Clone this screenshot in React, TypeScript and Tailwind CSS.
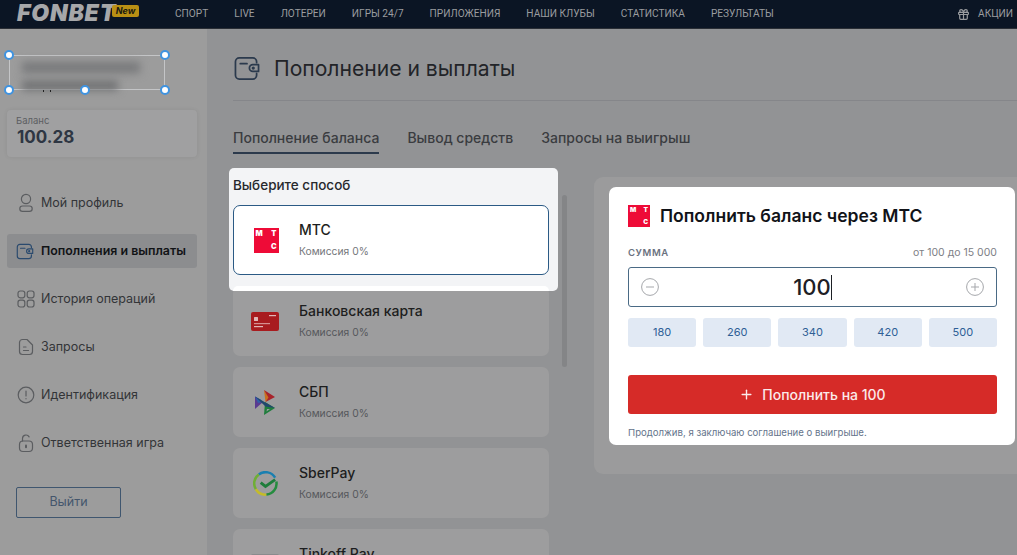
import { Gift, Plus } from "lucide-react";

const nav = ["СПОРТ", "LIVE", "ЛОТЕРЕИ", "ИГРЫ 24/7", "ПРИЛОЖЕНИЯ", "НАШИ КЛУБЫ", "СТАТИСТИКА", "РЕЗУЛЬТАТЫ"];
const presets = [180, 260, 340, 420, 500];

function WalletIcon({ className }: { className?: string }) {
  return (
    <svg viewBox="0 0 28 26" fill="none" stroke="currentColor" strokeWidth="1.8" className={className}>
      <path d="M24 7V6a4 4 0 0 0-4-4H6a4 4 0 0 0-4 4v14a4 4 0 0 0 4 4h14a4 4 0 0 0 4-4v-2" strokeLinecap="round" />
      <path d="M7 8h7" strokeLinecap="round" />
      <path d="M26 9h-6a3.5 3.5 0 0 0 0 7h6z" strokeLinejoin="round" />
      <circle cx="20.5" cy="12.5" r=".8" fill="currentColor" />
    </svg>
  );
}

function ProfileIcon() {
  return (
    <svg viewBox="0 0 20 20" fill="none" stroke="currentColor" strokeWidth="1.2" className="w-[20px] h-[20px]">
      <circle cx="10" cy="6" r="4.6" />
      <rect x="3.8" y="13" width="12.4" height="5.4" rx="2.7" />
    </svg>
  );
}

function GridIcon() {
  return (
    <svg viewBox="0 0 20 20" fill="none" stroke="currentColor" strokeWidth="1.2" className="w-[20px] h-[20px]">
      <rect x="2" y="2" width="6.8" height="6.8" rx="2.2" />
      <rect x="11.2" y="2" width="6.8" height="6.8" rx="2.2" />
      <rect x="2" y="11.2" width="6.8" height="6.8" rx="2.2" />
      <rect x="11.2" y="11.2" width="6.8" height="6.8" rx="2.2" />
    </svg>
  );
}

function DocIcon() {
  return (
    <svg viewBox="0 0 20 20" fill="none" stroke="currentColor" strokeWidth="1.2" strokeLinecap="round" className="w-[20px] h-[20px]">
      <path d="M8 2.5H6.5a3 3 0 0 0-3 3v9a3 3 0 0 0 3 3h7a3 3 0 0 0 3-3V8l-5.5-5.5z" strokeLinejoin="round" />
      <path d="M7.5 10h2.5M7.5 13.5h5" />
    </svg>
  );
}

function AlertIcon() {
  return (
    <svg viewBox="0 0 20 20" fill="none" stroke="currentColor" strokeWidth="1.2" strokeLinecap="round" className="w-[20px] h-[20px]">
      <circle cx="10" cy="10" r="7.8" />
      <path d="M10 6v5M10 13.6v.2" />
    </svg>
  );
}

function LockIcon() {
  return (
    <svg viewBox="0 0 20 20" fill="none" stroke="currentColor" strokeWidth="1.2" strokeLinecap="round" className="w-[20px] h-[20px]">
      <path d="M6.5 8V5.5a3.5 3.5 0 0 1 6.6-1.6" />
      <rect x="3.5" y="8" width="13" height="10.5" rx="3.5" />
      <path d="M10 12.4v1.8" strokeWidth="2" />
    </svg>
  );
}

function MtsLogo({ size }: { size: "lg" | "sm" }) {
  return (
    <div
      className={
        size === "lg"
          ? "w-[25px] h-[25px] bg-[#ee0b37] text-white font-black text-[7.5px] leading-none px-[2px] py-[2px] flex flex-col justify-between shrink-0"
          : "w-[22px] h-[22px] bg-[#ee0b37] text-white font-black text-[6.5px] leading-none px-[2px] py-[2px] flex flex-col justify-between shrink-0"
      }
    >
      <div className="flex justify-between">
        <span>М</span>
        <span>Т</span>
      </div>
      <div className="flex justify-end">
        <span>С</span>
      </div>
    </div>
  );
}

function CardLogo() {
  return (
    <svg viewBox="0 0 28 19" className="w-[28px] h-[19px]">
      <rect width="28" height="19" rx="2" fill="#a81c1f" />
      <rect x="3" y="5" width="4" height="4" rx=".5" fill="#e0b8b8" />
      <rect x="18" y="3" width="7" height="1.2" fill="#e0b8b8" />
      <rect x="3" y="11" width="16" height="1.2" fill="#d68f8f" />
      <rect x="3" y="14" width="9" height="1.2" fill="#e0b8b8" />
    </svg>
  );
}

function SbpLogo() {
  return (
    <svg viewBox="9 5 22 27" className="w-[22px] h-[27px]">
      <path d="M19 6l5.5 7.5-4 4.5z" fill="#c9701e" />
      <path d="M19 6l11 7-9.5 5 3-4.5z" fill="#a8232b" />
      <path d="M10 12.5V25l8-7z" fill="#5a3a90" />
      <path d="M10 12.5l6 3.2 1 2.3-4 1z" fill="#2f5fa8" />
      <path d="M20 18l10 6-11 7z" fill="#1f7d3c" />
      <path d="M10 12.5l20 11.5-9.5-1.5z" fill="#22476e" />
      <path d="M22 25l3 0-3.5 2.5z" fill="#9ea0a0" />
    </svg>
  );
}

function SberLogo() {
  return (
    <svg viewBox="0 0 26 26" fill="none" className="w-[25px] h-[25px]">
      <path d="M23 7A11.5 11.5 0 0 0 6 3.6" stroke="#1a7fb0" strokeWidth="2.6" />
      <path d="M6 3.6A11.5 11.5 0 0 0 3 19" stroke="#6fae35" strokeWidth="2.6" />
      <path d="M3 19a11.5 11.5 0 0 0 11 5.5" stroke="#c4bb2a" strokeWidth="2.6" />
      <path d="M14 24.5A11.5 11.5 0 0 0 24.3 11" stroke="#258c3f" strokeWidth="2.6" />
      <path d="M8 12l5 4 10-7" stroke="#1f7d3c" strokeWidth="3" />
    </svg>
  );
}

function MethodCard({ name, logo }: { name: string; logo: React.ReactNode }) {
  return (
    <div className="h-[70px] shrink-0 rounded-[7px] bg-[#9d9d9e] flex items-center pl-[18px]">
      <div className="w-[28px] flex justify-center shrink-0">{logo}</div>
      <div className="ml-[20px]">
        <div className="text-[14px] leading-[18px] font-medium text-[#1d1e20] -mt-[2px]">{name}</div>
        <div className="text-[10.3px] leading-[14px] text-[#56585c] mt-[5px]">Комиссия 0%</div>
      </div>
    </div>
  );
}

function MenuItem({ icon, label, active }: { icon: React.ReactNode; label: string; active?: boolean }) {
  return (
    <div
      className={
        active
          ? "h-[34px] w-[190px] ml-[7px] rounded-[3px] bg-[#8c8d8f] flex items-center pl-[9px] text-[12.4px] font-semibold text-[#111316]"
          : "h-[34px] w-[190px] ml-[7px] flex items-center pl-[9px] text-[12.5px] text-[#333538]"
      }
    >
      <span className={active ? "text-[#2a4a6e] w-[24px] shrink-0" : "text-[#5b5d60] w-[24px] shrink-0"}>{icon}</span>
      <span className="ml-px">{label}</span>
    </div>
  );
}

export default function App() {
  return (
    <div className="w-[1017px] h-[555px] overflow-hidden flex flex-col bg-[#929395] font-['Inter','Noto_Sans',sans-serif]">
      {/* Top bar */}
      <header className="h-[29px] shrink-0 bg-[#0b1524] flex items-center pl-[17px] pr-[4px] border-b border-[#2a2e35]">
        <div className="text-[23px] leading-none font-black italic tracking-[0.8px] text-[#a6a7a9] w-[91px] -mt-[2px]">FONBET</div>
        <div className="w-[27px] h-[12px] -mt-[7px] ml-[4px] rounded-[2px] bg-[#b98f14] text-[#1c1a10] text-[9px] leading-[12px] font-bold italic text-center">New</div>
        <nav className="flex gap-[26px] ml-[36px] font-['Roboto',sans-serif] text-[10.13px] text-[#9a9c9f]">
          {nav.map((n) => (
            <span key={n}>{n}</span>
          ))}
        </nav>
        <div className="ml-auto flex items-center gap-[8px] font-['Roboto',sans-serif] text-[10.13px] text-[#9a9c9f]">
          <Gift size={13} strokeWidth={2.2} />
          <span>АКЦИИ</span>
        </div>
      </header>

      <div className="flex flex-1 min-h-0">
        {/* Sidebar */}
        <aside className="w-[207px] shrink-0 bg-[#9c9c9c] flex flex-col">
          <div className="relative w-[156px] h-[35px] ml-[9px] mt-[26px] border border-[#c4c5c7]">
            <div className="absolute left-[12px] top-[6px] w-[118px] h-[11px] bg-[#77787a] blur-[4px]" />
            <div className="absolute left-[12px] top-[25px] w-[96px] h-[9px] bg-[#6c6d6f] blur-[4px]" />
            <span className="absolute left-[33px] top-[34px] w-px h-[2px] bg-[#222]" />
            <span className="absolute left-[40px] top-[34px] w-px h-[2px] bg-[#222]" />
            {[
              "left-[-6px] top-[-6px]",
              "left-[150px] top-[-6px]",
              "left-[-6px] top-[29px]",
              "left-[70px] top-[29px]",
              "left-[150px] top-[29px]",
            ].map((p) => (
              <span key={p} className={"absolute w-[10px] h-[10px] rounded-full bg-white border-[2px] border-[#3f93e0] " + p} />
            ))}
          </div>

          <div className="w-[190px] h-[47px] ml-[7px] mt-[20px] rounded-[4px] bg-[#a0a0a1] pl-[9px] pt-[5px] shadow-[0_0_4px_rgba(0,0,0,0.08)]">
            <div className="text-[9.5px] leading-[12px] text-[#5c5e61]">Баланс</div>
            <div className="text-[17px] leading-[20px] font-bold text-[#2e3643] ml-px">100.28</div>
          </div>

          <div className="flex flex-col gap-[14px] mt-[29px]">
            <MenuItem icon={<ProfileIcon />} label="Мой профиль" />
            <MenuItem icon={<WalletIcon className="w-[18px] h-[17px]" />} label="Пополнения и выплаты" active />
            <MenuItem icon={<GridIcon />} label="История операций" />
            <MenuItem icon={<DocIcon />} label="Запросы" />
            <MenuItem icon={<AlertIcon />} label="Идентификация" />
            <MenuItem icon={<LockIcon />} label="Ответственная игра" />
          </div>

          <div className="w-[105px] h-[31px] ml-[16px] mt-[27px] rounded-[2px] border border-[#3f566f] flex items-center justify-center text-[12.5px] text-[#44566c]">
            Выйти
          </div>
        </aside>

        {/* Main */}
        <main className="flex-1 min-w-0 pl-[26px] flex flex-col">
          <div className="h-[72px] shrink-0 border-b border-[#85868a] flex items-center gap-[12px] pt-[8px] text-[#2b3a4d]">
            <WalletIcon className="w-[28px] h-[25px]" />
            <span className="text-[21.1px] text-[#222428] ml-px">Пополнение и выплаты</span>
          </div>

          <div className="flex gap-[28px] mt-[26px] text-[14px] font-medium text-[#3a3c40] shrink-0">
            <span className="h-[27px] border-b-[2px] border-[#2c3a4c]">Пополнение баланса</span>
            <span>Вывод средств</span>
            <span>Запросы на выигрыш</span>
          </div>

          <div className="flex flex-1 min-h-0 mt-[14px]">
            <div className="relative w-[316px] shrink-0 flex flex-col gap-[11px]">
              {/* Highlighted step */}
              <div className="bg-[#f3f4f6] rounded-[5px] -mx-[4px] mr-[-9px] px-[4px] pr-[9px] h-[123px] -mb-[16px] relative shrink-0">
                <div className="text-[13.5px] leading-[18px] font-medium text-[#27292d] pt-[8px] h-[37px]">Выберите способ</div>
                <div className="h-[70px] rounded-[7px] bg-white border-[1.5px] border-[#2b5a85] flex items-center pl-[18px]">
                  <div className="w-[28px] flex justify-center shrink-0">
                    <MtsLogo size="lg" />
                  </div>
                  <div className="ml-[19px]">
                    <div className="text-[14px] leading-[18px] font-medium text-[#1d1e20] -mt-[2px]">МТС</div>
                    <div className="text-[10.3px] leading-[14px] text-[#75777b] mt-[5px]">Комиссия 0%</div>
                  </div>
                </div>
                <div className="absolute left-[4px] right-[9px] bottom-0 h-[5px] bg-white rounded-t-[6px]" />
              </div>
              <MethodCard name="Банковская карта" logo={<CardLogo />} />
              <MethodCard name="СБП" logo={<SbpLogo />} />
              <MethodCard name="SberPay" logo={<SberLogo />} />
              <MethodCard name="Tinkoff Pay" logo={<div className="w-[28px] h-[20px] rounded-[2px] bg-[#8a8b8d]" />} />
            </div>

            {/* Scrollbar */}
            <div className="w-[5px] h-[172px] ml-[13px] mt-[27px] rounded-full bg-[#848587] shrink-0" />

            {/* Amount panel */}
            <div className="w-[423px] h-[297px] ml-[27px] mt-[9px] rounded-l-[9px] bg-[#9b9b9c] pl-[15px] pt-[10px] shrink-0">
              <div className="w-[406px] h-[258px] rounded-[7px] bg-white pl-[19px] pr-[18px] pt-[18px]">
                <div className="flex items-center gap-[10px]">
                  <MtsLogo size="sm" />
                  <span className="text-[17.55px] leading-[22px] font-semibold text-[#111318]">Пополнить баланс через МТС</span>
                </div>
                <div className="flex justify-between items-center mt-[19px] h-[14px]">
                  <span className="text-[9.5px] font-semibold tracking-[0.6px] text-[#6b7280]">СУММА</span>
                  <span className="text-[10.5px] text-[#7d8086]">от 100 до 15 000</span>
                </div>
                <div className="h-[40px] mt-[7px] rounded-[3px] border border-[#4a6a85] flex items-center justify-between px-[12px]">
                  <svg viewBox="0 0 18 18" fill="none" stroke="#a5a7ab" strokeWidth="1" className="w-[18px] h-[18px]">
                    <circle cx="9" cy="9" r="8.4" />
                    <path d="M5 9h8" />
                  </svg>
                  <span className="text-[22px] font-medium text-[#1d2025] flex items-center">
                    100
                    <span className="w-px h-[25px] bg-[#1d2025]" />
                  </span>
                  <svg viewBox="0 0 18 18" fill="none" stroke="#a5a7ab" strokeWidth="1" className="w-[18px] h-[18px]">
                    <circle cx="9" cy="9" r="8.4" />
                    <path d="M5 9h8M9 5v8" />
                  </svg>
                </div>
                <div className="grid grid-cols-5 gap-[7px] mt-[11px]">
                  {presets.map((p) => (
                    <div key={p} className="h-[29px] rounded-[3px] bg-[#e1e9f4] flex items-center justify-center text-[11px] text-[#2e5f96]">
                      {p}
                    </div>
                  ))}
                </div>
                <div className="h-[39px] mt-[28px] rounded-[3px] bg-[#d62b28] flex items-center justify-center gap-[8px] text-[14px] font-medium text-[#fbeaea]">
                  <Plus size={15} strokeWidth={2.2} />
                  <span>Пополнить на 100</span>
                </div>
                <div className="text-[9.6px] leading-[12px] text-[#64748b] mt-[13px]">Продолжив, я заключаю соглашение о выигрыше.</div>
              </div>
            </div>
          </div>
        </main>
      </div>
    </div>
  );
}
